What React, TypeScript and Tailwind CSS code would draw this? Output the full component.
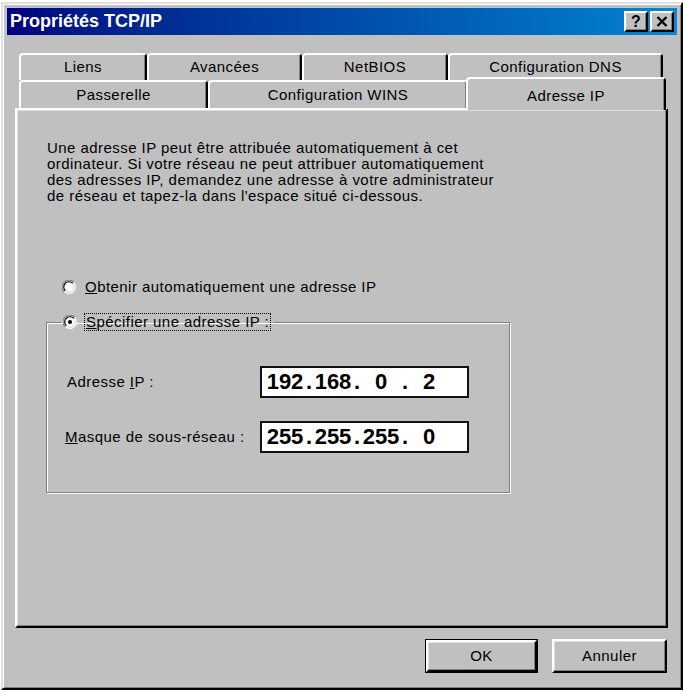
import React from "react"

function Radio({ checked }: { checked?: boolean }) {
  return (
    <svg width="14" height="14" viewBox="0 0 12 12" className="shrink-0">
      <circle cx="6" cy="6" r="5.5" fill="none" stroke="#fff" strokeWidth="1" />
      <path d="M10.2 1.8 A5.5 5.5 0 0 0 1.8 10.2" fill="none" stroke="#808080" strokeWidth="1" />
      <circle cx="6" cy="6" r="4.5" fill="#fff" stroke="#dfdfdf" strokeWidth="1" />
      <path d="M9.2 2.8 A4.5 4.5 0 0 0 2.8 9.2" fill="none" stroke="#000" strokeWidth="1" />
      {checked && <circle cx="6" cy="6" r="1.8" fill="#000" />}
    </svg>
  )
}

function Tab({ label, w }: { label: string; w: string }) {
  return (
    <div
      className={`${w} h-full flex items-center justify-center border-t-2 border-l-2 border-r-2 border-t-white border-l-white border-r-black rounded-t-[4px] shadow-[inset_-1px_0_0_#808080]`}
    >
      {label}
    </div>
  )
}

function Button({ label, isDefault }: { label: string; isDefault?: boolean }) {
  return (
    <div className={`h-[34px] ${isDefault ? "w-[113px] border border-black" : "w-[115px]"}`}>
      <div className="h-full w-full flex items-center justify-center border-2 border-t-white border-l-white border-r-black border-b-black shadow-[inset_-1px_-1px_0_#808080,inset_1px_1px_0_#dfdfdf]">
        {label}
      </div>
    </div>
  )
}

function IpField({ parts }: { parts: string[] }) {
  return (
    <div className="w-[209px] h-[32px] bg-white border-2 border-[#111] flex items-center pl-[3px] text-[22px] font-bold leading-none tracking-normal">
      {parts.map((p, i) => (
        <React.Fragment key={i}>
          <span className="w-[40px] text-center">{p}</span>
          {i < 3 && <span className="w-[8px] text-center">.</span>}
        </React.Fragment>
      ))}
    </div>
  )
}

export default function App() {
  return (
    <div className="w-[684px] h-[693px] bg-white pt-[2px] pl-[1px] font-['Liberation_Sans',Arial,sans-serif] text-[15px] tracking-[0.45px] text-black">
      {/* Window */}
      <div className="w-[682px] h-[688px] bg-[#c0c0c0] border-2 border-t-[#dfdfdf] border-l-[#dfdfdf] border-r-black border-b-black shadow-[inset_1px_1px_0_#fff,inset_-1px_-1px_0_#808080] p-[4px]">
        {/* Title bar */}
        <div className="h-[27px] flex items-center justify-between bg-linear-to-r from-[#000080] to-[#1084d0] pl-[3px] pr-[3px]">
          <span className="text-white font-bold text-[18px] tracking-normal">Propriétés TCP/IP</span>
          <div className="flex gap-[2px]">
            <div className="w-[24px] h-[21px] flex items-center justify-center border-2 border-t-white border-l-white border-r-black border-b-black shadow-[inset_-1px_-1px_0_#808080] bg-[#c0c0c0] font-bold text-[16px] leading-none">
              ?
            </div>
            <div className="w-[24px] h-[21px] flex items-center justify-center border-2 border-t-white border-l-white border-r-black border-b-black shadow-[inset_-1px_-1px_0_#808080] bg-[#c0c0c0]">
              <svg width="12" height="11" viewBox="0 0 12 11">
                <path d="M1.5 1 L10.5 10 M10.5 1 L1.5 10" stroke="#000" strokeWidth="2.4" />
              </svg>
            </div>
          </div>
        </div>

        {/* Content */}
        <div className="pl-[8px] pr-[9px] pt-[18px]">
          {/* Tabs back row */}
          <div className="flex h-[27px] pl-[4px]">
            <Tab label="Liens" w="w-[128px]" />
            <Tab label="Avancées" w="w-[155px]" />
            <Tab label="NetBIOS" w="w-[146px]" />
            <Tab label="Configuration DNS" w="w-[215px]" />
          </div>
          {/* Tabs front row */}
          <div className="flex items-end h-[28px] pl-[4px]">
            <Tab label="Passerelle" w="w-[189px]" />
            <Tab label="Configuration WINS" w="w-[260px]" />
            <div className="relative top-[2px] z-10 -ml-[2px] w-[200px] h-[33px] bg-[#c0c0c0] flex justify-center pt-[6px] border-t-2 border-l-2 border-r-2 border-t-white border-l-white border-r-black rounded-t-[4px] shadow-[inset_-1px_0_0_#808080]">
              Adresse IP
            </div>
          </div>

          {/* Panel */}
          <div className="h-[520px] border-2 border-t-white border-l-white border-r-black border-b-black shadow-[inset_-1px_-1px_0_#808080,inset_1px_1px_0_#dfdfdf] px-[30px] pt-[30px]">
            <div className="leading-[16px]">
              <div>Une adresse IP peut être attribuée automatiquement à cet</div>
              <div>ordinateur. Si votre réseau ne peut attribuer automatiquement</div>
              <div>des adresses IP, demandez une adresse à votre administrateur</div>
              <div>de réseau et tapez-la dans l'espace situé ci-dessous.</div>
            </div>

            <div className="flex items-center h-[18px] ml-[15px] mt-[74px] gap-[9px]">
              <Radio />
              <span>
                <span className="underline">O</span>btenir automatiquement une adresse IP
              </span>
            </div>

            <fieldset className="-ml-[1px] mt-[17px] w-[464px] border border-[#808080] shadow-[inset_1px_1px_0_#fff,1px_1px_0_#fff] pb-[39px]">
              <legend className="ml-[14px] px-[2px]">
                <div className="flex items-center gap-[7px] h-[18px]">
                  <Radio checked />
                  <span className="border border-dotted border-black px-[1px] leading-[16px]">
                    <span className="underline">S</span>pécifier une adresse IP :
                  </span>
                </div>
              </legend>

              <div className="flex items-center mt-[35px] pl-[20px]">
                <span className="w-[193px]">
                  Adresse <span className="underline">I</span>P :
                </span>
                <IpField parts={["192", "168", "0", "2"]} />
              </div>
              <div className="flex items-center mt-[23px] pl-[18px]">
                <span className="w-[195px]">
                  <span className="underline">M</span>asque de sous-réseau :
                </span>
                <IpField parts={["255", "255", "255", "0"]} />
              </div>
            </fieldset>
          </div>

          {/* Buttons */}
          <div className="flex justify-end gap-[14px] mt-[11px] pr-[1px]">
            <Button label="OK" isDefault />
            <Button label="Annuler" />
          </div>
        </div>
      </div>
    </div>
  )
}
